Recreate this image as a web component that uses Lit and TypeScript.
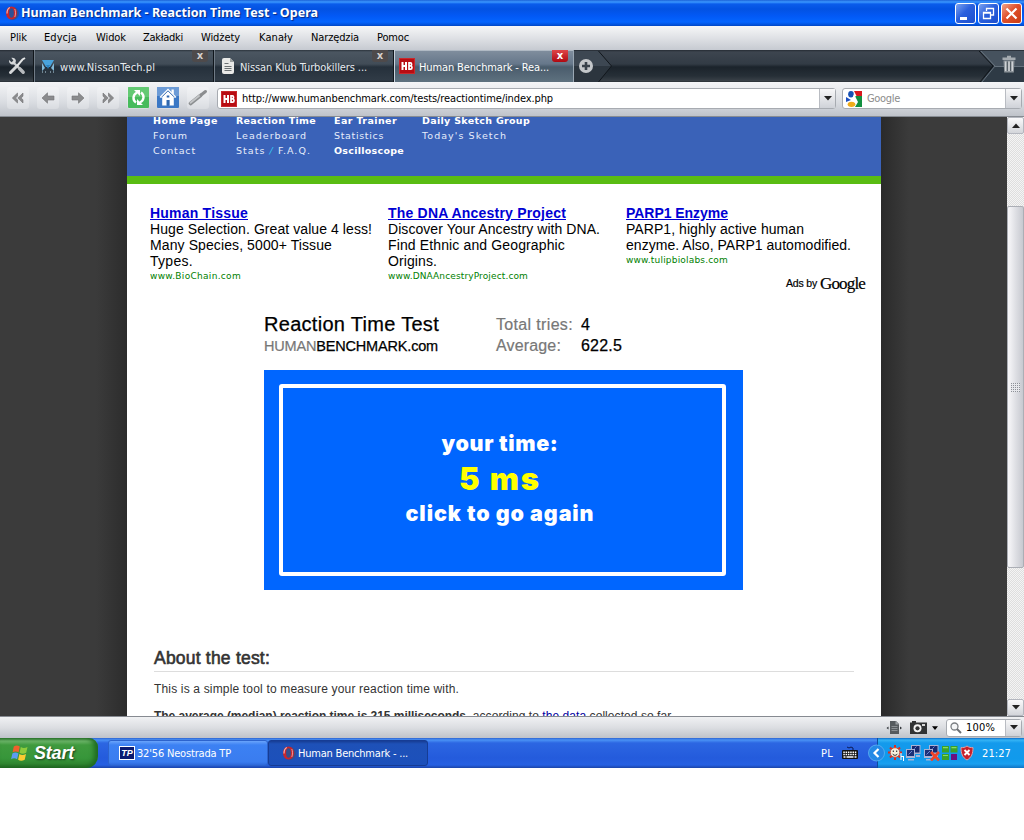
import { LitElement, html, svg, css } from 'lit'
import { customElement, property } from 'lit/decorators.js'

// one line of text, tracked out or in so that it takes up exactly `width` pixels
@customElement('text-line')
export class TextLine extends LitElement {
  @property({ type: Number }) width = 0

  static styles = css`
    :host {
      display: inline-block;
      flex: none;
      white-space: nowrap;
    }
  `

  firstUpdated() {
    const count = this.textContent.trim().length
    if (!this.width || !count) return
    const natural = this.getBoundingClientRect().width
    this.style.letterSpacing = `${(this.width - natural) / count}px`
  }

  render() {
    return html`<slot></slot>`
  }
}

const operaIcon = html`
  <svg width="16" height="16" viewBox="0 0 16 16">
    <ellipse cx="9" cy="8.500" rx="6" ry="6.500" fill="#3a4f80" opacity=".8" />
    <path fill="#c9252c" fill-rule="evenodd" d="M7.500 1.500C4.500 1.500 2 4.300 2 8s2.500 6.500 5.500 6.500S13 11.700 13 8s-2.500-6.500-5.500-6.500zm0 1.700c1.600 0 2.400 2 2.400 4.800s-.8 4.800-2.400 4.800S5.100 10.800 5.100 8s.8-4.800 2.400-4.800z" />
    <path fill="none" stroke="#f3b0ac" stroke-width="1.200" d="M3 8.500C3 5.800 4 3.600 5.800 2.600" />
    <path fill="none" stroke="#e9a4a6" stroke-width=".9" d="M10.800 4c.9 2 1 5.500 0 8" />
  </svg>`

const hbIcon = html`
  <svg width="16" height="16" viewBox="0 0 16 16">
    <rect width="16" height="16" fill="#b80c12" />
    <rect x=".5" y=".5" width="15" height="15" fill="none" stroke="#c9282b" />
    <path fill="none" stroke="#fff" stroke-width="2" d="M3.500 4v8M7 4v8M3.500 8H8" />
    <path fill="none" stroke="#fff" stroke-width="1.700" d="M10 4v8M9.500 4.900h2c1.400 0 1.400 2.900 0 2.900h-1.500 1.700c1.700 0 1.700 3.400 0 3.400H9.500" />
  </svg>`

const nissanIcon = html`
  <svg width="14" height="14" viewBox="0 0 14 14">
    <path fill="#49a3dc" d="M1 1h12L9 8H5z" />
    <path fill="#2d82be" d="M5 6h4L7 10z" />
    <path fill="#82b9d8" d="M1 4l3 5-3 3zM13 4l-3 5 3 3z" />
    <path stroke="#b9d8e8" fill="none" d="M1 13h1M4 13h1M9 13h1M12 13h1" />
  </svg>`

const pageIcon = html`
  <svg width="12" height="16" viewBox="0 0 12 16">
    <path fill="#e9e9e7" d="M2 0h6l4 4v10a2 2 0 0 1-2 2H2a2 2 0 0 1-2-2V2a2 2 0 0 1 2-2z" />
    <path fill="#9b9f9f" d="M8 0l4 4H8z" />
    <path stroke="#6b7072" d="M2.500 5.500h4M2.500 8.500h7M2.500 10.500h7M2.500 12.500h7" />
  </svg>`

const toolsIcon = html`
  <svg width="18" height="18" viewBox="0 0 18 18">
    <path stroke="#c9cccf" stroke-width="2.200" d="M5 5l10 10" />
    <path stroke="#b7babd" stroke-width="3.400" stroke-linecap="round" d="M11.500 11.500l3.700 3.700" />
    <path fill="#d5d7d9" d="M1 3l2.600 2.200L5.400 3.500 3.300.8C5.500.2 7.600 1.400 7.900 3.500l-.2 1.700-2 2.200C3.400 8.200.6 6.200 1 3z" />
    <path stroke="#d5d7d9" stroke-width="3" stroke-linecap="round" d="M2.500 15.500L9 9" />
    <path stroke="#e4e5e6" stroke-width="2" d="M9 9l5.500-6.500L17 1" />
  </svg>`

const trashIcon = html`
  <svg width="14" height="18" viewBox="0 0 14 18">
    <path fill="#a5abb0" d="M5 0h4v2h4.500v2.500H.5V2H5z" />
    <path fill="#8e959b" d="M1.500 5h11l-.7 12H2.200z" />
    <path stroke="#e0e3e5" stroke-width="1.200" d="M3.800 6v9.500M7 6v9.500M10.200 6v9.500" />
    <path stroke="#4d565d" d="M5.300 6v9.500M8.600 6v9.500" />
  </svg>`

const arrow = (d: string) => html`
  <svg width="14" height="14" viewBox="0 0 14 14">
    <path fill="#8a8b8d" stroke="#737476" stroke-width=".6" d=${d} />
  </svg>`

const rewind = arrow('M6.500 2v3.200L4.500 7l2 1.800V12L1.300 7zM12 2v3.200L10 7l2 1.800V12L6.800 7z')
const back = arrow('M6.500 1.800V5H13v4H6.500v3.200L1 7z')
const forward = arrow('M7.500 1.800V5H1v4h6.500v3.200L13 7z')
const fastForward = arrow('M7.500 2v3.200l2 1.800-2 1.800V12l5.200-5zM2 2v3.200L4 7 2 8.800V12l5.200-5z')

const reloadIcon = html`
  <svg width="21" height="21" viewBox="0 0 21 21">
    <rect width="21" height="21" rx="1" fill="#47bb5c" />
    <rect width="21" height="10" fill="#6fcf7d" opacity=".7" />
    <path fill="none" stroke="#fff" stroke-width="2.400" d="M8 15.500C4.500 13 4.500 8 9 5.500M13 5.500c3.500 2.500 3.500 7.500-1 10" />
    <path fill="#fff" d="M6 3h6v6zM15 18H9v-6z" />
  </svg>`

const homeIcon = html`
  <svg width="22" height="21" viewBox="0 0 22 21">
    <rect width="22" height="21" rx="1" fill="#3b78c5" />
    <rect width="22" height="9" fill="#6c9bd6" />
    <path fill="#fff" d="M11 1.500l8.500 8.500-1.500 1-1.200-1v8.500h-4.500v-5.500H9.700v5.500H5.200V10L4 11l-1.500-1z" />
    <path fill="#fff" d="M14.500 2.500h2.300v5l-2.300-2z" />
    <path fill="none" stroke="#2f67ae" stroke-width="1" d="M5 9.800l6-6 6 6" />
    <rect x="9.700" y="8.500" width="2.600" height="2" fill="#2f67ae" />
    <rect x="9.700" y="13" width="2.800" height="5.500" fill="#2f67ae" />
  </svg>`

const wandIcon = html`
  <svg width="20" height="18" viewBox="0 0 20 18">
    <path stroke="#8b8e90" stroke-width="3.600" stroke-linecap="round" d="M2.500 14.500l10-8" />
    <path stroke="#c3c5c7" stroke-width="1.800" stroke-linecap="round" d="M2.500 13.700l10-8" />
    <path stroke="#8b8d8f" stroke-width="3" stroke-linecap="round" d="M13 6l4.500-3.500" />
  </svg>`

const googleIcon = html`
  <svg width="16" height="16" viewBox="0 0 16 16">
    <rect width="16" height="16" fill="#fff" />
    <path fill="#d8181e" d="M8 0h8v6h-5z" />
    <path fill="#129040" d="M9 5h7v11H9l3-5z" />
    <path fill="#1c4fc0" d="M0 6l5 3-5 2z" />
    <ellipse cx="5" cy="3.200" rx="2.800" ry="3.200" fill="#1650b5" />
    <ellipse cx="5.500" cy="13.300" rx="3.800" ry="2.600" fill="#f0ac1a" />
    <path fill="#fff" d="M8 3c2 1 2 3 0 4 2 1 3 2 2 5L8 11 6 8z" />
  </svg>`

const caret = (up = false) => html`
  <svg width="8" height="5" viewBox="0 0 8 5">
    <path fill="#222" d=${up ? 'M0 5l4-4.500L8 5z' : 'M0 0h8L4 4.500z'} />
  </svg>`

const printIcon = html`
  <svg width="16" height="14" viewBox="0 0 16 14">
    <path fill="#555a5e" d="M4 0h6l3 3v10H4z" />
    <path fill="#9ba0a4" d="M9.500 0L13 3.500H9.500z" />
    <path stroke="#8a8f93" d="M5.500 5.500h6M5.500 7.500h6M5.500 9.500h6" />
    <path fill="#303438" d="M2.500 5.500v3L.5 7zM14 5.500v3l2-1.500z" />
  </svg>`

const cameraIcon = html`
  <svg width="17" height="13" viewBox="0 0 17 13">
    <path fill="#303234" d="M2 0h4v1.500h11V13H0V1.500h2z" />
    <circle cx="7.500" cy="7.300" r="4" fill="#f2f2f2" />
    <circle cx="7.500" cy="7.300" r="2.100" fill="#303234" />
    <rect x="12" y="3" width="3" height="2" fill="#d8d8d8" />
  </svg>`

const searchIcon = html`
  <svg width="12" height="12" viewBox="0 0 12 12">
    <circle cx="4.500" cy="4.500" r="3.500" fill="#f5f6f7" stroke="#7b7f83" stroke-width="1.300" />
    <path stroke="#6c7074" stroke-width="2" d="M7 7l4 4" />
  </svg>`

const windowsFlag = html`
  <svg width="18" height="18" viewBox="0 0 18 18">
    <path fill="#f0602c" d="M2.800 2.500c2-1.300 4-1.300 6 0L7.600 8.300c-2-1.200-4-1.200-6 0z" />
    <path fill="#8ecb3c" d="M9.800 3c2 1.200 4.200 1.200 6.700 0l-1.300 5.800c-2.500 1.200-4.600 1.200-6.600 0z" />
    <path fill="#5b9cf2" d="M1.400 9.400c2-1.200 4-1.200 6 0l-1.300 5.800c-2-1.200-4-1.200-6 0z" />
    <path fill="#fbcb32" d="M8.400 10c2 1.200 4.100 1.200 6.600 0l-1.300 5.800c-2.500 1.200-4.600 1.200-6.600 0z" />
  </svg>`

const keyboardIcon = html`
  <svg width="16" height="14" viewBox="0 0 16 14">
    <path fill="none" stroke="#0b1a55" d="M5 1l2 1 2-1 2 1v2" />
    <rect x="0" y="4" width="16" height="9" rx="1" fill="#111" />
    <path stroke="#fff" stroke-width="1.500" stroke-dasharray="1.500 .8" d="M1.300 6.300h13.500M1.300 8.500h13.500" />
    <path stroke="#fff" stroke-width="1.300" d="M1.500 11h2M4.500 11h7M12.500 11h2" />
  </svg>`

const chevronIcon = html`
  <svg width="17" height="18" viewBox="0 0 17 18">
    <circle cx="8.500" cy="9" r="8" fill="#2389e6" stroke="#62b2f2" stroke-width=".8" />
    <path fill="none" stroke="#fff" stroke-width="2.200" d="M10.500 5L6.500 9l4 4" />
  </svg>`

const sunIcon = html`
  <svg width="16" height="16" viewBox="0 0 16 16">
    <path stroke="#e02a1c" stroke-width="2" d="M7 0v15M0 7.500h14M2 2.500l10 10M12 2.500l-10 10" />
    <circle cx="7" cy="7.500" r="4.800" fill="#f4efdd" stroke="#c9503c" />
    <path fill="none" stroke="#222" d="M4.500 8.800c1.500 2 3.500 2 5 0M5.300 5.500v1.500M8.700 5.500v1.500" />
    <path fill="none" stroke="#fff" d="M13 8v7M15.500 11v5M13 11.500h2.500" />
  </svg>`

const networkIcon = (broken: boolean) => html`
  <svg width="16" height="16" viewBox="0 0 16 16">
    <path fill="#aab2d4" d="M5 0h9.500v9H5zM10 10h4v2h-4z" />
    <path fill="#17286e" d="M6 1h7.500v6.500H6z" />
    <path fill="#aab2d4" d="M0 4h9v9H0zM2 14h6v1.500H2z" />
    <path fill="#1c3078" d="M1 5h7v6H1z" />
    <path stroke="#6f86d0" d="M2.500 9.500L6 6M8.500 3.500l2-2" />
    ${broken ? svg`<path stroke="#f04428" stroke-width="2.600" d="M7 7l8 8.500M15 7l-8 8.500" />` : ''}
  </svg>`

const blocksIcon = html`
  <svg width="16" height="16" viewBox="0 0 16 16">
    <path fill="#3ba22a" d="M0 1h7v6.500H0zM8.500 1h7v6.500h-7zM0 9h7v6H0z" />
    <path fill="#6b1180" d="M9 9h6v6H9z" />
    <path fill="#86db64" d="M1 2h5v1.200H1zM9.500 2h5v1.200h-5zM1 10h5v1H1z" />
  </svg>`

const shieldIcon = html`
  <svg width="14" height="16" viewBox="0 0 14 16">
    <path fill="#c8202a" stroke="#dfa0a4" d="M7 1c2 1.500 4 1.700 6 1.600 0 6-1.500 10-6 12.400C2.500 12.600 1 8.600 1 2.600 3 2.700 5 2.500 7 1z" />
    <path stroke="#fff" stroke-width="1.900" d="M4.500 5l5 5M9.500 5l-5 5" />
  </svg>`

const menu = [
  ['Plik', 17], ['Edycja', 33], ['Widok', 30], ['Zakładki', 40],
  ['Widżety', 39], ['Kanały', 34], ['Narzędzia', 48], ['Pomoc', 32]
]

const tabs = [
  { title: 'www.NissanTech.pl', width: 95, icon: nissanIcon, active: false },
  { title: 'Nissan Klub Turbokillers ...', width: 127, icon: pageIcon, active: false },
  { title: 'Human Benchmark - Rea...', width: 130, icon: hbIcon, active: true }
]

const ads = [
  {
    title: 'Human Tissue', width: 98, url: 'www.BioChain.com', urlWidth: 91,
    lines: [['Huge Selection. Great value 4 less!', 222], ['Many Species, 5000+ Tissue', 182], ['Types.', 43]]
  },
  {
    title: 'The DNA Ancestry Project', width: 178, url: 'www.DNAAncestryProject.com', urlWidth: 140,
    lines: [['Discover Your Ancestry with DNA.', 212], ['Find Ethnic and Geographic', 177], ['Origins.', 49]]
  },
  {
    title: 'PARP1 Enzyme', width: 102, url: 'www.tulipbiolabs.com', urlWidth: 102,
    lines: [['PARP1, highly active human', 178], ['enzyme. Also, PARP1 automodified.', 225]]
  }
]

@customElement('app-root')
export class AppRoot extends LitElement {
  static styles = [
    css`
      * {
        box-sizing: border-box;
      }

      :host {
        display: flex;
        flex-direction: column;
        width: 1024px;
        height: 840px;
        overflow: hidden;
        background: #fff;
        color: #000;
        font-family: 'DejaVu Sans Condensed', 'DejaVu Sans', sans-serif;
        font-size: 11px;
        line-height: 14px;
      }

      svg {
        display: block;
        flex: none;
      }

      .titlebar {
        display: flex;
        align-items: center;
        height: 26px;
        padding: 0 2px 0 4px;
        background: linear-gradient(#1c62d8 0, #3b97ff 2px, #0a5ceb 4px, #0352e2 9px, #0259f6 16px, #0465ff 22px, #0150d8 25px, #0246c0);
        color: #fff;
        font: bold 12.500px/18px 'Noto Sans', 'Open Sans', sans-serif;
        text-shadow: 1px 1px 1px #0a2a80;
      }

      .titlebar text-line {
        margin: 0 auto 0 1px;
      }

      .window-button {
        display: flex;
        width: 21px;
        height: 21px;
        margin-left: 2px;
        border: 1px solid #fff;
        border-radius: 3px;
        background: linear-gradient(135deg, #7ba2f0, #2b60dd 45%, #1c4fce);
      }

      .window-button.close {
        background: linear-gradient(135deg, #f0a48c, #e0512c 45%, #c83c14);
      }

      .menu {
        display: grid;
        grid-template-columns: 34px 52px 47px 58px 58px 52px 66px 60px;
        align-items: center;
        height: 24px;
        padding: 0 0 1px 10px;
        background: linear-gradient(#f6f7f8, #dfe1e5 50%, #c6cad1);
      }

      .tabbar {
        display: flex;
        height: 32px;
        background: linear-gradient(#252b33 0, #3d454f 2px, #323b45 14px, #1b232b 17px, #262f37 26px, #3a4148 31px, #22282e);
      }

      .tools {
        display: flex;
        align-items: center;
        justify-content: center;
        width: 34px;
        border-right: 1px solid #11161b;
      }

      .tab {
        display: flex;
        align-items: center;
        width: 180px;
        padding-left: 5px;
        border-left: 1px solid #707b86;
        border-right: 1px solid #10161c;
        background: linear-gradient(#2c343c 0, #4b5661 2px, #414c57 14px, #25303b 17px, #303b46 30px, #20282f);
        color: #e8ecef;
      }

      .tab text-line {
        margin: 3px auto 0 4px;
      }

      .tab svg {
        width: 16px;
      }

      .tab.active {
        padding-left: 4px;
        border-left-color: #c9d3dd;
        border-right-color: #9aa7b3;
        background: linear-gradient(#e0e5ea 0, #7f8d9d 1px, #66778a 14px, #4a5c6c 17px, #5d707e 31px);
        color: #fff;
      }

      .tab-close {
        align-self: flex-start;
        display: flex;
        justify-content: center;
        width: 16px;
        height: 12px;
        margin-right: 5px;
        border-radius: 0 0 3px 3px;
        background: #4e4a4b;
        color: #d4d0cd;
        font: bold 10px/11px 'DejaVu Sans', sans-serif;
      }

      .active .tab-close {
        background: linear-gradient(#e04548, #ae0912);
        color: #fff;
      }

      .spacer {
        flex: 1;
      }

      .navbar {
        display: flex;
        align-items: center;
        height: 35px;
        padding: 0 2px 1px 3px;
        border-bottom: 1px solid #878c93;
        background: linear-gradient(#f4f5f7, #d9dce1 60%, #bfc3ca);
      }

      .nav-button {
        display: flex;
        align-items: center;
        justify-content: center;
        width: 22px;
        height: 22px;
        margin: 0 4px 2px;
        border-radius: 3px;
        background: rgba(255, 255, 255, 0.25);
      }

      .field {
        display: flex;
        align-items: center;
        height: 21px;
        padding-left: 3px;
        border: 1px solid #a7abb1;
        border-radius: 3px;
        background: #fff;
      }

      .field text-line {
        margin: 1px auto 0 5px;
      }

      .address {
        width: 619px;
        margin: 0 6px 0 4px;
      }

      .search {
        width: 180px;
        color: #8b8b8b;
      }

      .drop {
        display: flex;
        align-items: center;
        justify-content: center;
        align-self: stretch;
        width: 16px;
        border-left: 1px solid #b9bcc2;
        background: linear-gradient(#f8f8f9, #cfd2d8);
      }

      .viewport {
        display: flex;
        height: 599px;
        overflow: hidden;
        background: #3b3b3b;
        font-family: 'Liberation Sans', sans-serif;
      }

      .side {
        width: 127px;
        background: linear-gradient(90deg, #3b3b3b 96px, #2c2c2c);
      }

      .side.right {
        width: 126px;
        background: linear-gradient(90deg, #2a2a2a, #3b3b3b 28px);
      }

      .page {
        width: 754px;
        background: #fff;
      }

      .site-nav {
        display: grid;
        grid-template-columns: 83px 98px 88px 120px;
        align-content: start;
        height: 67px;
        padding-left: 26px;
        border-bottom: 8px solid #59bc12;
        background: #3a62b8;
        color: #e6edfb;
        font: 9.500px/15px 'DejaVu Sans', sans-serif;
      }

      .site-nav div {
        display: flex;
        flex-direction: column;
        align-items: flex-start;
      }

      /* the page is scrolled a few pixels into its first row of links */
      .site-nav text-line:first-child {
        height: 11px;
        line-height: 7px;
      }

      .site-nav b {
        color: #fff;
      }

      .site-nav i {
        color: #35c8f5;
      }

      .ads {
        display: grid;
        grid-template-columns: repeat(3, 238px);
        height: 91px;
        padding: 21px 0 0 23px;
        font-size: 14px;
        line-height: 16px;
      }

      .ad {
        display: flex;
        flex-direction: column;
        align-items: flex-start;
      }

      .ad-title {
        color: #0000d4;
        font-weight: bold;
        text-decoration: underline;
      }

      .ad-url {
        color: #008000;
        font: 9px/15px 'DejaVu Sans', sans-serif;
      }

      .ads-by {
        display: flex;
        align-items: center;
        justify-content: flex-end;
        gap: 3px;
        height: 18px;
        padding: 0 16px 2px 0;
      }

      .ads-by text-line:first-child {
        font-size: 10.500px;
        -webkit-text-stroke: 0.2px #000;
      }

      .google {
        font: 17px/17px 'Liberation Serif', serif;
        -webkit-text-stroke: 0.2px #000;
      }

      .summary {
        display: grid;
        grid-template-columns: 232px 85px 60px;
        grid-auto-rows: 21px;
        padding: 21px 0 14px 137px;
        font-size: 16px;
        line-height: 21px;
      }

      .name {
        font-size: 20px;
      }

      .domain {
        font-size: 14.500px;
        line-height: 22px;
      }

      .name,
      .strong {
        -webkit-text-stroke: 0.25px #000;
      }

      .muted {
        color: #777;
        -webkit-text-stroke: 0.2px #777;
      }

      .test {
        width: 479px;
        height: 220px;
        margin-left: 137px;
        padding: 14px 17px 14px 15px;
        background: #0066ff;
      }

      .frame {
        display: flex;
        flex-direction: column;
        align-items: center;
        height: 192px;
        padding: 38px 5px 0 0;
        border: 4px solid #fff;
        border-radius: 3px;
        color: #fff;
        font: 900 21.500px/34px Inter, 'Liberation Sans', sans-serif;
      }

      .score {
        color: #ffff00;
        font-size: 31px;
        line-height: 38px;
      }

      .again {
        line-height: 30px;
      }

      .about {
        width: 700px;
        margin: 58px 0 0 27px;
        color: #333;
        font-size: 12px;
        line-height: 18px;
      }

      .about-title {
        height: 24px;
        margin-bottom: 8px;
        border-bottom: 1px solid #ddd;
        font-size: 17.500px;
        line-height: 20px;
        -webkit-text-stroke: 0.6px #333;
      }

      .about-line {
        display: flex;
        height: 27px;
        white-space: pre;
      }

      .data-link {
        color: #0000a0;
        text-decoration: underline;
      }

      .scrollbar {
        display: flex;
        flex-direction: column;
        align-items: center;
        width: 17px;
        background: repeating-conic-gradient(#dedede 0 25%, #f4f4f4 0 50%) 0 0 / 2px 2px;
      }

      .scroll-button {
        display: flex;
        align-items: center;
        justify-content: center;
        width: 17px;
        height: 17px;
        border: 1px solid #b4b7bf;
        border-radius: 2px;
        background: linear-gradient(#fafafb, #d3d5da);
      }

      .thumb {
        display: flex;
        align-items: center;
        justify-content: center;
        width: 17px;
        height: 362px;
        margin: 72px 0 auto;
        border: 1px solid #abaeb5;
        border-radius: 2px;
        background: linear-gradient(90deg, #f8f8fa, #dcdde2 55%, #c7c9d0);
      }

      .grip {
        width: 9px;
        height: 9px;
        background:
          linear-gradient(90deg, transparent 1px, #e6e7eb 1px) 0 0 / 2px 2px,
          linear-gradient(#8d9097 1px, #e6e7eb 1px) 0 0 / 2px 2px;
      }

      .statusbar {
        display: flex;
        align-items: center;
        justify-content: flex-end;
        height: 22px;
        padding: 0 2px 0 0;
        border-top: 1px solid #868a91;
        background: linear-gradient(#f0f1f3, #dcdee2 50%, #bfc3ca);
      }

      .print {
        margin-right: 8px;
      }

      .zoom {
        width: 76px;
        height: 18px;
        margin-left: 8px;
      }

      .camera-menu {
        margin-left: 5px;
      }

      .zoom text-line {
        margin-left: 4px;
      }

      .taskbar {
        display: flex;
        align-items: center;
        height: 30px;
        background: linear-gradient(#2c64d2 0, #4a92f5 2px, #2c66e2 5px, #245bdc 20px, #2660e2 27px, #1b44a8);
        color: #fff;
      }

      .start {
        display: flex;
        align-items: center;
        width: 98px;
        height: 30px;
        margin-right: 10px;
        padding-left: 11px;
        border-radius: 0 9px 12px 0;
        background: linear-gradient(#357a35 0, #6fb86c 3px, #3f9a3e 7px, #37963a 20px, #2f8630 26px, #1e641f);
        box-shadow: inset -4px 0 5px #1f6b20;
        font: italic bold 18px/24px 'Liberation Sans', sans-serif;
        text-shadow: 1px 1px 2px #1b3d1b;
      }

      .start text-line {
        margin-left: 5px;
      }

      .task {
        display: flex;
        align-items: center;
        gap: 2px;
        width: 160px;
        height: 26px;
        padding-left: 10px;
        border: 1px solid #2c63cd;
        border-radius: 3px;
        background: linear-gradient(#6aa4fb 0, #3c81f3 4px, #3a7cef 21px, #2d68da);
      }

      .task text-line {
        margin-top: 1px;
      }

      .task.pressed {
        padding-left: 12px;
        gap: 1px;
        border-color: #163c94;
        background: linear-gradient(#173d94 0, #1e51b8 3px, #1c50bb);
      }

      .tp {
        width: 16px;
        height: 14px;
        border: 1px solid #fff;
        background: #0a1a70;
        font: italic bold 9px/12px 'Liberation Sans', sans-serif;
        text-align: center;
      }

      .lang {
        margin: 1px 9px 0 auto;
      }

      .chevron {
        margin: 0 -8px 0 10px;
        z-index: 1;
      }

      .tray {
        display: flex;
        align-items: center;
        width: 147px;
        height: 30px;
        padding-left: 10px;
        border-left: 1px solid #0e4e9e;
        background: linear-gradient(#0e6cc8 0, #35b4f5 2px, #149aec 5px, #109aec 21px, #1aa0f0 26px, #1074c4);
      }

      .tray svg {
        margin-right: 2px;
      }

      .tray text-line {
        margin: 1px 0 0 6px;
      }
    `
  ]

  renderTitlebar() {
    return html`
      <div class="titlebar">
        ${operaIcon}
        <text-line width="297">Human Benchmark - Reaction Time Test - Opera</text-line>
        <span class="window-button">
          <svg width="19" height="19"><path fill="#fff" d="M4 13h7v3H4z" /></svg>
        </span>
        <span class="window-button">
          <svg width="19" height="19" fill="none" stroke="#fff" stroke-width="1.300">
            <path d="M7.500 7V4.500h7v6.500H12M7 4.500h8" />
            <path d="M4.500 8.500h7v6h-7zM4 9h8" />
          </svg>
        </span>
        <span class="window-button close">
          <svg width="19" height="19"><path stroke="#fff" stroke-width="2.200" d="M4.500 4.500l10 10M14.500 4.500l-10 10" /></svg>
        </span>
      </div>
    `
  }

  renderTabs() {
    return html`
      <div class="tabbar">
        <span class="tools">${toolsIcon}</span>
        ${tabs.map(
          tab => html`
            <div class="tab ${tab.active ? 'active' : ''}">
              ${tab.icon}
              <text-line width=${tab.width}>${tab.title}</text-line>
              <span class="tab-close">x</span>
            </div>
          `
        )}
        <svg width="40" height="32" viewBox="0 0 40 32">
          <path fill="#3d4752" d="M0 1h25l12.500 15H0z" />
          <path fill="#2c353e" d="M0 16h37.500L25 32H0z" />
          <path fill="none" stroke="#11161b" d="M24.500 1l13 15-13 16" />
          <circle cx="12" cy="16" r="7" fill="#c4c7ca" />
          <path stroke="#39424b" stroke-width="2.600" d="M12 12v8M8 16h8" />
        </svg>
        <span class="spacer"></span>
        <svg width="45" height="32" viewBox="0 0 45 32">
          <path fill="#46525e" d="M1 1h44v15H15z" />
          <path fill="#2e3a45" d="M15 16h30v16H2z" />
          <path fill="none" stroke="#10151a" d="M0 1l14 15L1 32" />
          <path fill="none" stroke="#66727d" d="M2 1l14 15L3 32M16 16.500h29" />
          <g transform="translate(23 5.500)">${trashIcon}</g>
        </svg>
      </div>
    `
  }

  renderNavbar() {
    return html`
      <div class="navbar">
        ${[rewind, back, forward, fastForward, reloadIcon, homeIcon, wandIcon].map(
          icon => html`<span class="nav-button">${icon}</span>`
        )}
        <div class="field address">
          ${hbIcon}
          <text-line width="311">http://www.humanbenchmark.com/tests/reactiontime/index.php</text-line>
          <span class="drop">${caret()}</span>
        </div>
        <div class="field search">
          ${googleIcon}
          <text-line width="33">Google</text-line>
          <span class="drop">${caret()}</span>
        </div>
      </div>
    `
  }

  renderPage() {
    return html`
      <div class="page">
        <div class="site-nav">
          <div>
            <text-line width="65"><b>Home Page</b></text-line>
            <text-line width="35">Forum</text-line>
            <text-line width="43">Contact</text-line>
          </div>
          <div>
            <text-line width="80"><b>Reaction Time</b></text-line>
            <text-line width="71">Leaderboard</text-line>
            <text-line width="75">Stats <i>/</i> F.A.Q.</text-line>
          </div>
          <div>
            <text-line width="63"><b>Ear Trainer</b></text-line>
            <text-line width="50">Statistics</text-line>
            <text-line width="70"><b>Oscilloscope</b></text-line>
          </div>
          <div>
            <text-line width="108"><b>Daily Sketch Group</b></text-line>
            <text-line width="85">Today's Sketch</text-line>
          </div>
        </div>
        <div class="ads">
          ${ads.map(
            ad => html`
              <div class="ad">
                <text-line class="ad-title" width=${ad.width}>${ad.title}</text-line>
                ${ad.lines.map(([text, width]) => html`<text-line width=${width}>${text}</text-line>`)}
                <text-line class="ad-url" width=${ad.urlWidth}>${ad.url}</text-line>
              </div>
            `
          )}
        </div>
        <div class="ads-by">
          <text-line width="31">Ads by</text-line>
          <text-line class="google" width="45">Google</text-line>
        </div>
        <div class="summary">
          <span><text-line class="name" width="175">Reaction Time Test</text-line></span>
          <span><text-line class="muted" width="77">Total tries:</text-line></span>
          <span class="strong">4</span>
          <span><text-line class="domain" width="174"><span class="muted">HUMAN</span><span class="strong">BENCHMARK.com</span></text-line></span>
          <span><text-line class="muted" width="65">Average:</text-line></span>
          <span><text-line class="strong" width="41">622.5</text-line></span>
        </div>
        <div class="test">
          <div class="frame">
            <text-line width="117">your time:</text-line>
            <text-line class="score" width="82">5 ms</text-line>
            <text-line class="again" width="189">click to go again</text-line>
          </div>
        </div>
        <div class="about">
          <div class="about-title"><text-line width="116">About the test:</text-line></div>
          <div class="about-line"><text-line width="305">This is a simple tool to measure your reaction time with.</text-line></div>
          <div class="about-line">
            <text-line width="312"><b>The average (median) reaction time is 215 milliseconds</b></text-line><text-line width="208">, according to <span class="data-link">the data</span> collected so far.</text-line>
          </div>
        </div>
      </div>
    `
  }

  renderTaskbar() {
    return html`
      <div class="taskbar">
        <div class="start">${windowsFlag}<text-line width="40">Start</text-line></div>
        <div class="task"><span class="tp">TP</span><text-line width="94">32'56 Neostrada TP</text-line></div>
        <div class="task pressed">${operaIcon}<text-line width="110">Human Benchmark - ...</text-line></div>
        <text-line class="lang" width="12">PL</text-line>
        ${keyboardIcon}
        <span class="chevron">${chevronIcon}</span>
        <div class="tray">
          ${sunIcon} ${networkIcon(false)} ${networkIcon(true)} ${blocksIcon} ${shieldIcon}
          <text-line width="29">21:27</text-line>
        </div>
      </div>
    `
  }

  render() {
    return html`
      ${this.renderTitlebar()}
      <div class="menu">
        ${menu.map(([label, width]) => html`<span><text-line width=${width}>${label}</text-line></span>`)}
      </div>
      ${this.renderTabs()} ${this.renderNavbar()}
      <div class="viewport">
        <div class="side"></div>
        ${this.renderPage()}
        <div class="side right"></div>
        <div class="scrollbar">
          <span class="scroll-button">${caret(true)}</span>
          <span class="thumb"><span class="grip"></span></span>
          <span class="scroll-button">${caret()}</span>
        </div>
      </div>
      <div class="statusbar">
        <span class="print">${printIcon}</span>
        ${cameraIcon}
        <svg class="camera-menu" width="6" height="4" viewBox="0 0 8 5"><path d="M0 0h8L4 5z" /></svg>
        <div class="field zoom">
          ${searchIcon}
          <text-line width="29">100%</text-line>
          <span class="drop">${caret()}</span>
        </div>
      </div>
      ${this.renderTaskbar()}
    `
  }
}
